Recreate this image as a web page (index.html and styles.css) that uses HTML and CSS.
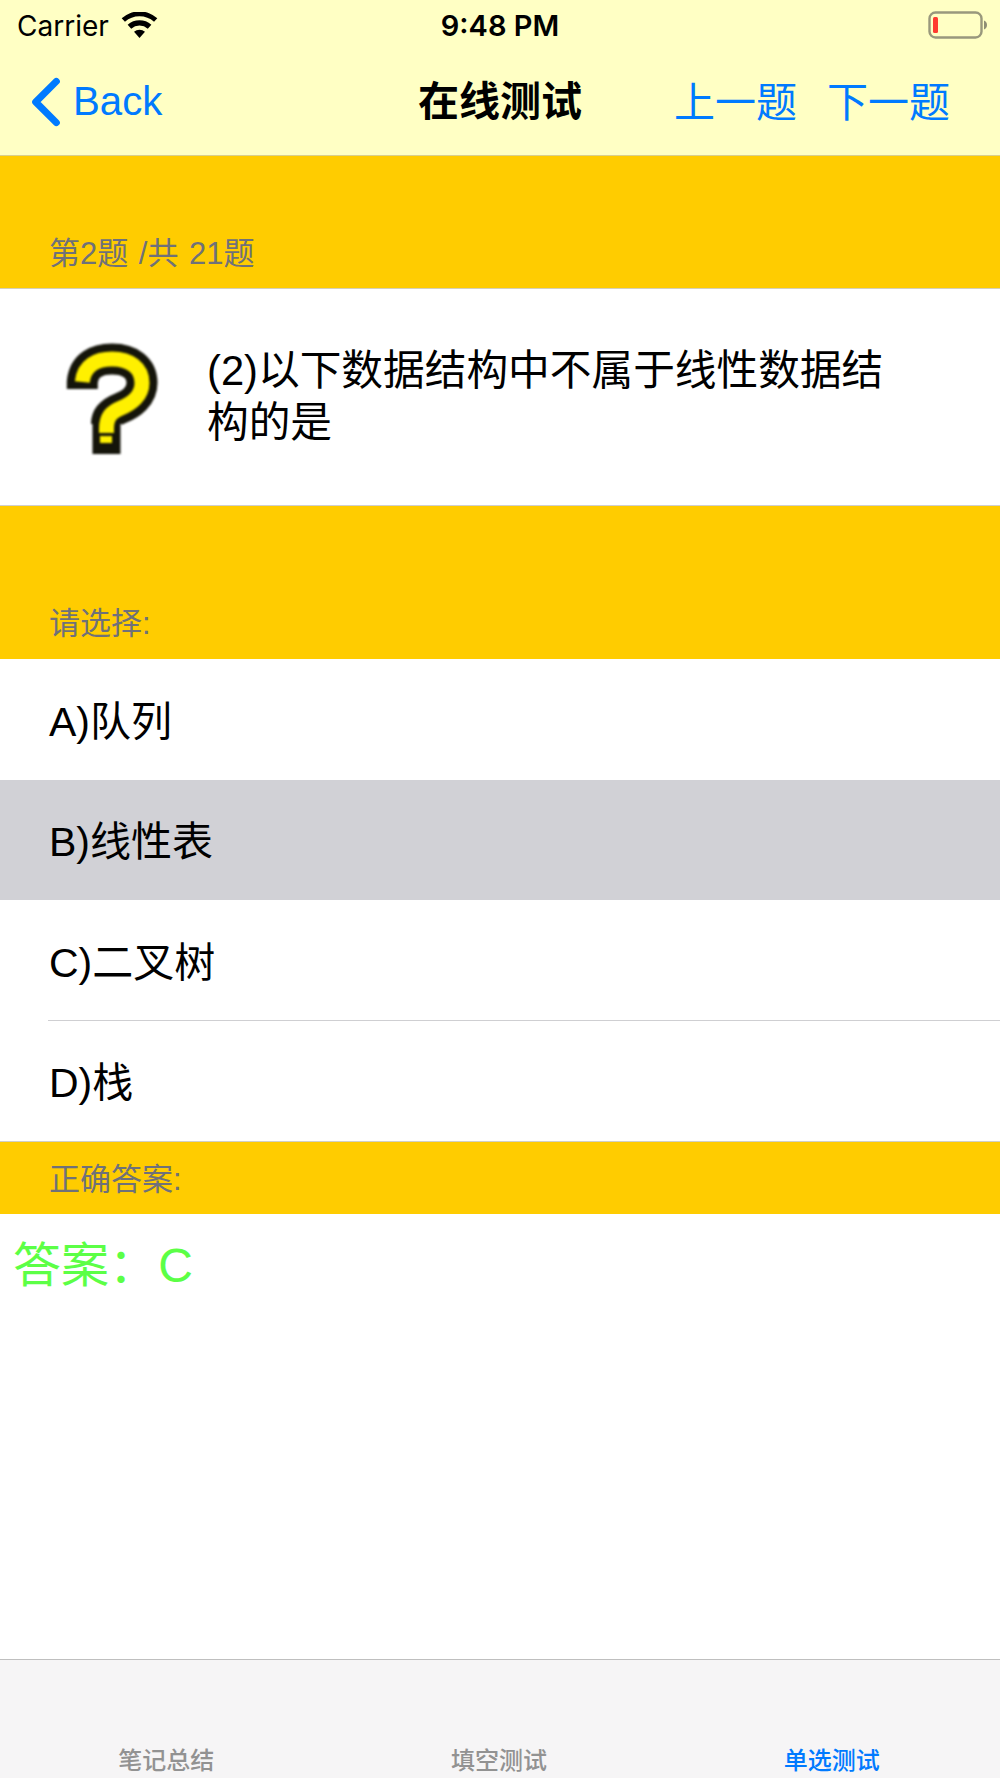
FILE: index.html
```html
<!DOCTYPE html>
<html lang="zh">
<head>
<meta charset="utf-8">
<title>在线测试</title>
<link rel="stylesheet" href="styles.css">
</head>
<body>
<div class="screen">
  <header class="top">
    <div class="status">
      <div class="status-left">
        <span>Carrier</span>
        <svg class="wifi" viewBox="0 0 37 27"><path d="M18.5 27 12.8 20.6a8.6 8.6 0 0 1 11.4 0Z"/><path d="M9.900 17.400 6.200 13.300a18.600 18.600 0 0 1 24.600 0l-3.700 4.100a13 13 0 0 0-17.200 0Z"/><path d="M3.400 10.200 0 6.400a27.800 27.800 0 0 1 37 0l-3.400 3.800a22.700 22.700 0 0 0-30.200 0Z"/></svg>
      </div>
      <div class="status-time">9:48 PM</div>
      <svg class="battery" viewBox="0 0 60 28"><rect x="1.500" y="1.500" width="52" height="25" rx="6" fill="none" stroke="#99987c" stroke-width="2.400"/><rect x="5" y="6" width="5" height="16" rx="1.500" fill="#ff3b30"/><path d="M56 9.500c2 .6 3 2.400 3 4.500s-1 3.900-3 4.500Z" fill="#8f8e74"/></svg>
    </div>
    <nav class="nav">
      <div class="nav-back">
        <svg class="chevron" viewBox="0 0 32 52"><path d="M27 4 5 26l22 22" fill="none" stroke="#007aff" stroke-width="7.500" stroke-linecap="round" stroke-linejoin="round"/></svg>
        <span>Back</span>
      </div>
      <div class="nav-title">在线测试</div>
      <div class="nav-actions"><span>上一题</span><span>下一题</span></div>
    </nav>
  </header>

  <section class="band band-first"><span>第2题 /共 21题</span></section>

  <section class="question">
    <svg class="qmark" viewBox="0 0 115 125">
      <path d="M27.300 53V46C29 29 42 23 57 23C75 23 87 32 87 47C87 60 76 68 66 72C56 76 51.500 81 51.500 88" fill="none" stroke="#14140a" stroke-width="31" stroke-linejoin="round"/>
      <path d="M51.500 82V118" fill="none" stroke="#14140a" stroke-width="28"/>
      <path d="M27.300 46C29 29 42 23 57 23C75 23 87 32 87 47C87 60 76 68 66 72C56 76 51.500 81 51.500 93V97" fill="none" stroke="#fff000" stroke-width="15"/>
      <rect x="45" y="100" width="12" height="7" fill="#fff000"/>
    </svg>
    <p class="question-text">(2)以下数据结构中不属于线性数据结构的是</p>
  </section>

  <section class="band band-second"><span>请选择:</span></section>

  <ul class="options">
    <li class="option">A)队列</li>
    <li class="option option-selected">B)线性表</li>
    <li class="option option-divided">C)二叉树</li>
    <li class="option">D)栈</li>
  </ul>

  <section class="band band-third"><span>正确答案:</span></section>

  <main class="answer">答案： C</main>

  <footer class="tabs">
    <div class="tab">笔记总结</div>
    <div class="tab">填空测试</div>
    <div class="tab tab-active">单选测试</div>
  </footer>
</div>
</body>
</html>
```
FILE: styles.css
```css
* { box-sizing: border-box; }
html, body { margin: 0; padding: 0; }
body {
  width: 1000px;
  height: 1778px;
  overflow: hidden;
  background: #fff;
  font-family: "Liberation Sans", "Noto Sans CJK SC", sans-serif;
  color: #000;
}
.screen { display: flex; flex-direction: column; height: 1778px; }

.top { height: 156px; background: #ffffc4; border-bottom: 1px solid #d8cf8e; flex: none; }
.status { height: 49px; display: flex; align-items: center; position: relative; padding: 2px 12px 0 17px; justify-content: space-between; }
.status-left { display: flex; align-items: center; gap: 12px; font-size: 28px; font-family: Inter, sans-serif; }
.wifi { width: 37px; height: 26px; margin-top: -2px; }
.status-time { position: absolute; left: 0; right: 0; text-align: center; font-size: 29px; font-weight: 600; font-family: Inter, sans-serif; }
.battery { width: 60px; height: 28px; margin-top: -2px; }

.nav { height: 106px; display: flex; align-items: center; position: relative; padding: 0 50px 0 31px; justify-content: space-between; }
.nav-back { display: flex; align-items: center; gap: 12px; color: #007aff; font-size: 40.200px; }
.chevron { width: 30px; height: 52px; }
.nav-title { position: absolute; left: 0; right: 0; text-align: center; font-size: 41px; font-weight: 700; margin-top: -9px; pointer-events: none; }
.nav-actions { display: flex; gap: 30px; color: #007aff; font-size: 41px; margin-top: -7px; }

.band { background: #ffcc00; color: #6f7179; font-size: 31px; padding-left: 49px; display: flex; align-items: flex-end; flex: none; }
.band-first { height: 133px; padding-bottom: 15px; border-bottom: 1px solid #d4cfb8; word-spacing: 2px; }
.band-second { height: 153px; padding-bottom: 16px; }
.band-third { height: 73px; padding-bottom: 15px; border-top: 1px solid #cfcfc8; }

.question { height: 217px; display: flex; align-items: center; padding: 0 110px 0 55px; gap: 37px; border-bottom: 1px solid #cfcfcf; flex: none; }
.qmark { width: 115px; height: 125px; flex: none; margin-top: 3px; filter: blur(1px); }
.question-text { margin: -1px 0 0; font-size: 41.700px; line-height: 52px; }

.options { margin: 0; padding: 0; list-style: none; flex: none; }
.option { height: 120.500px; display: flex; align-items: center; padding: 0 0 3px 49px; font-size: 41px; position: relative; }
.option-selected { background: #d1d1d6; }
.option-divided::after { content: ""; position: absolute; left: 48px; right: 0; bottom: 0; height: 1px; background: #cfcfd2; }

.answer { flex: 1; color: #5cff46; font-size: 48px; padding: 24px 0 0 13px; line-height: 56px; word-spacing: -0.25em; }

.tabs { height: 119px; flex: none; background: #f6f5f6; border-top: 1px solid #bfbfbf; display: grid; grid-template-columns: repeat(3, 1fr); align-items: end; padding-bottom: 3px; padding-right: 2px; }
.tab { text-align: center; font-size: 24px; font-weight: 500; color: #929292; line-height: 28px; }
.tab-active { color: #007aff; }
```
